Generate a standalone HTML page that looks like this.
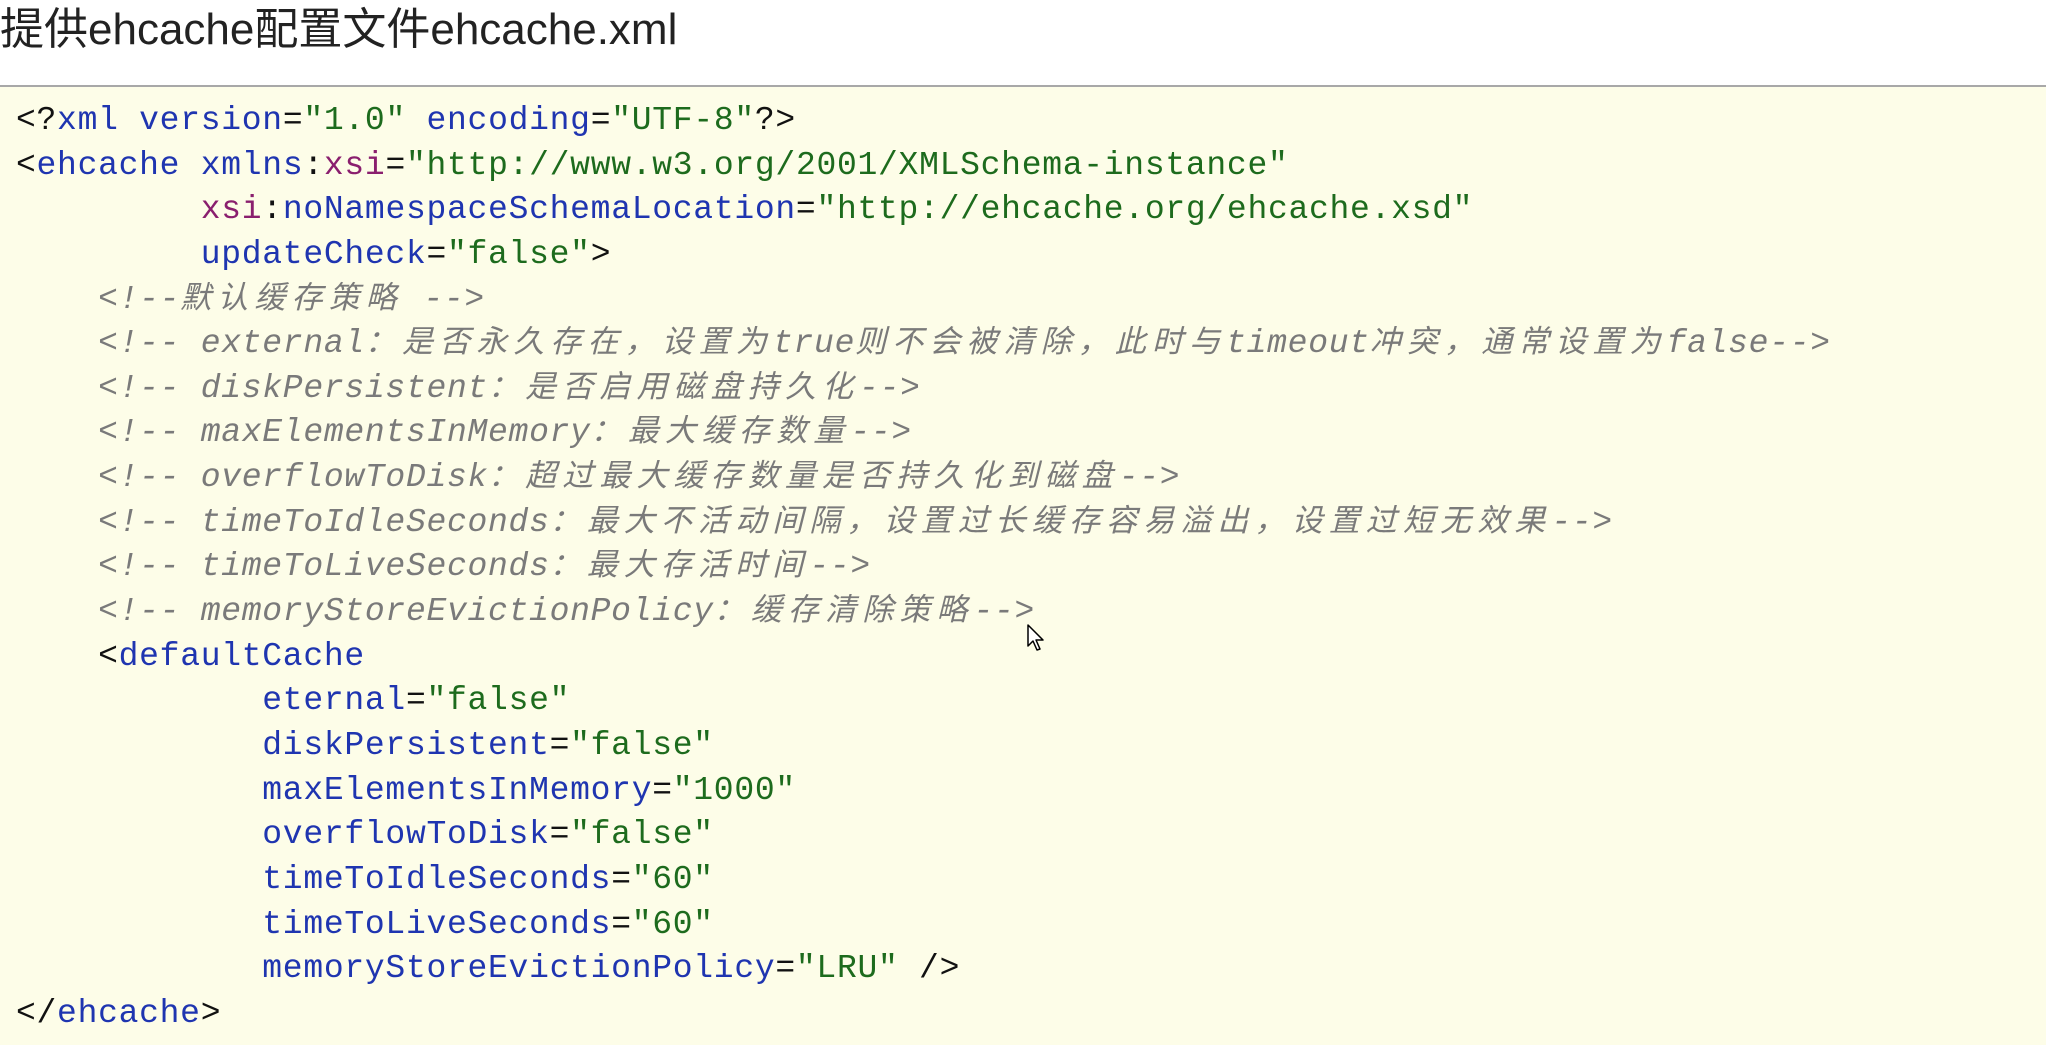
<!DOCTYPE html>
<html><head><meta charset="utf-8">
<style>
html,body{margin:0;padding:0;width:2046px;height:1043px;overflow:hidden;background:#fff;}
.title{position:absolute;left:0;top:4px;font-family:"Liberation Sans","Noto Sans CJK SC",sans-serif;font-size:44px;color:#222;white-space:nowrap;line-height:52px;}
.box{position:absolute;left:0;top:85px;width:2046px;height:958px;background:#fdfde8;border-top:2px solid #a8a8a8;}
.code{position:absolute;left:16px;top:99px;margin:0;font-family:"Liberation Mono","Noto Sans CJK SC",monospace;font-size:33px;letter-spacing:0.72px;color:#111;}
.code div{height:44.65px;line-height:44.65px;white-space:pre;overflow:visible;}
.t{color:#1f35b0}.a{color:#1f35b0}.s{color:#1d6b1d}.p{color:#8a1f6e}
.c{color:#7a7a7a;font-style:italic}
.k{font-family:"Noto Sans CJK SC",sans-serif;font-size:31px;letter-spacing:6.1px;line-height:0;}
.cur{position:absolute;left:1027px;top:624px;}
</style></head><body>
<div class="title">提供ehcache配置文件ehcache.xml</div>
<div class="box"></div>
<div class="code">
<div>&lt;?<span class="t">xml</span> <span class="a">version</span>=<span class="s">"1.0"</span> <span class="a">encoding</span>=<span class="s">"UTF-8"</span>?&gt;</div>
<div>&lt;<span class="t">ehcache</span> <span class="a">xmlns</span>:<span class="p">xsi</span>=<span class="s">"http://www.w3.org/2001/XMLSchema-instance"</span></div>
<div>         <span class="p">xsi</span>:<span class="a">noNamespaceSchemaLocation</span>=<span class="s">"http://ehcache.org/ehcache.xsd"</span></div>
<div>         <span class="a">updateCheck</span>=<span class="s">"false"</span>&gt;</div>
<div>    <span class="c">&lt;!--<span class="k">默认缓存策略</span> --&gt;</span></div>
<div>    <span class="c">&lt;!-- external<span class="k">：是否永久存在，设置为</span>true<span class="k">则不会被清除，此时与</span>timeout<span class="k">冲突，通常设置为</span>false--&gt;</span></div>
<div>    <span class="c">&lt;!-- diskPersistent<span class="k">：是否启用磁盘持久化</span>--&gt;</span></div>
<div>    <span class="c">&lt;!-- maxElementsInMemory<span class="k">：最大缓存数量</span>--&gt;</span></div>
<div>    <span class="c">&lt;!-- overflowToDisk<span class="k">：超过最大缓存数量是否持久化到磁盘</span>--&gt;</span></div>
<div>    <span class="c">&lt;!-- timeToIdleSeconds<span class="k">：最大不活动间隔，设置过长缓存容易溢出，设置过短无效果</span>--&gt;</span></div>
<div>    <span class="c">&lt;!-- timeToLiveSeconds<span class="k">：最大存活时间</span>--&gt;</span></div>
<div>    <span class="c">&lt;!-- memoryStoreEvictionPolicy<span class="k">：缓存清除策略</span>--&gt;</span></div>
<div>    &lt;<span class="t">defaultCache</span></div>
<div>            <span class="a">eternal</span>=<span class="s">"false"</span></div>
<div>            <span class="a">diskPersistent</span>=<span class="s">"false"</span></div>
<div>            <span class="a">maxElementsInMemory</span>=<span class="s">"1000"</span></div>
<div>            <span class="a">overflowToDisk</span>=<span class="s">"false"</span></div>
<div>            <span class="a">timeToIdleSeconds</span>=<span class="s">"60"</span></div>
<div>            <span class="a">timeToLiveSeconds</span>=<span class="s">"60"</span></div>
<div>            <span class="a">memoryStoreEvictionPolicy</span>=<span class="s">"LRU"</span> /&gt;</div>
<div>&lt;/<span class="t">ehcache</span>&gt;</div>
</div>
<svg class="cur" width="20" height="30" viewBox="0 0 20 30"><path d="M1 1 L1 22 L6 17 L10 26 L13 25 L9 16 L16 16 Z" fill="#fff" stroke="#000" stroke-width="1.5" stroke-linejoin="round"/></svg>
</body></html>
